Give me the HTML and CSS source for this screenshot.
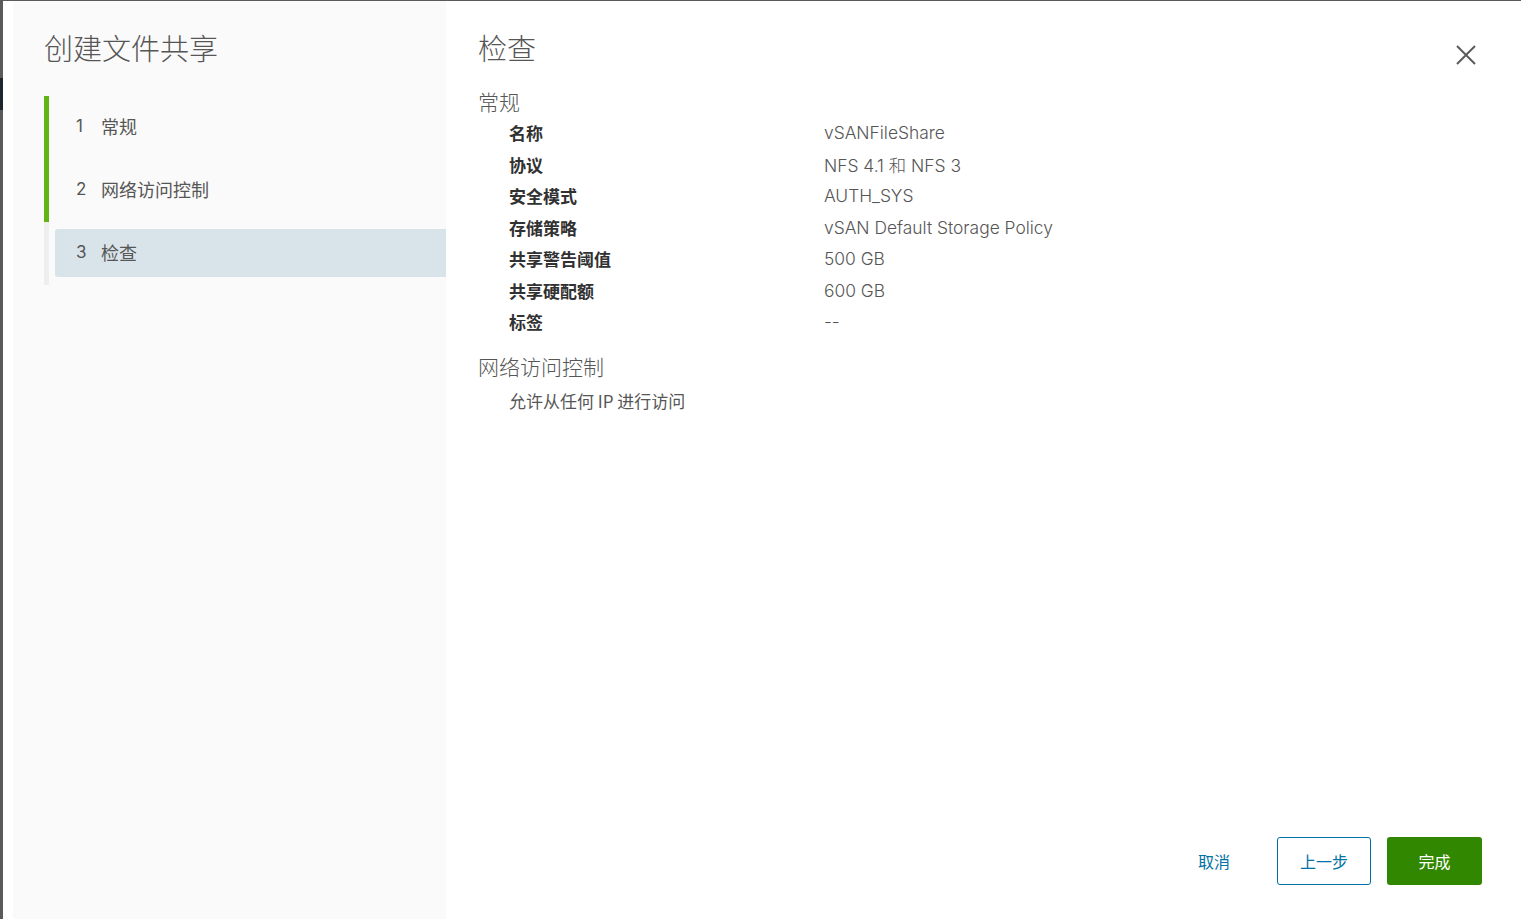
FILE: index.html
```html
<!DOCTYPE html>
<html lang="zh-CN">
<head>
<meta charset="utf-8">
<title>创建文件共享</title>
<link rel="stylesheet" href="styles.css">
</head>
<body>
<div class="modal">
  <aside class="sidebar">
    <h1 class="wizard-title">创建文件共享</h1>
    <ol class="steps">
      <li class="step done"><div class="step-btn"><span class="num">1</span><span>常规</span></div></li>
      <li class="step done"><div class="step-btn"><span class="num">2</span><span>网络访问控制</span></div></li>
      <li class="step current"><div class="step-btn"><span class="num">3</span><span>检查</span></div></li>
    </ol>
  </aside>
  <main class="content">
    <header class="content-head">
      <h2 class="page-title">检查</h2>
      <button class="close" aria-label="关闭">
        <svg width="20" height="20" viewBox="0 0 20 20"><path d="M1 1 L19 19 M19 1 L1 19" stroke="#5c5c5c" stroke-width="2" fill="none"/></svg>
      </button>
    </header>
    <section class="section">
      <h3 class="section-title">常规</h3>
      <div class="rows">
        <div class="row"><span class="label">名称</span><span class="value">vSANFileShare</span></div>
        <div class="row"><span class="label">协议</span><span class="value">NFS 4.1 和 NFS 3</span></div>
        <div class="row"><span class="label">安全模式</span><span class="value">AUTH_SYS</span></div>
        <div class="row"><span class="label">存储策略</span><span class="value">vSAN Default Storage Policy</span></div>
        <div class="row"><span class="label">共享警告阈值</span><span class="value">500 GB</span></div>
        <div class="row"><span class="label">共享硬配额</span><span class="value">600 GB</span></div>
        <div class="row"><span class="label">标签</span><span class="value">--</span></div>
      </div>
    </section>
    <section class="section second">
      <h3 class="section-title">网络访问控制</h3>
      <div class="rows">
        <div class="row"><span class="value plain">允许从任何 IP 进行访问</span></div>
      </div>
    </section>
    <footer class="footer">
      <button class="btn flat">取消</button>
      <button class="btn outline">上一步</button>
      <button class="btn primary">完成</button>
    </footer>
  </main>
</div>
</body>
</html>
```

FILE: styles.css
```css
* { box-sizing: border-box; }
html, body { margin: 0; padding: 0; }
body {
  width: 1521px;
  height: 919px;
  overflow: hidden;
  background: linear-gradient(to bottom, #5a5a5a 0, #5a5a5a 78px, #1c272d 78px, #1c272d 110px, #5a5a5a 110px);
  font-family: "Inter", "Noto Sans CJK SC", sans-serif;
  color: #565656;
}
.modal {
  margin: 1px 0 0 3px;
  width: 1518px;
  height: 918px;
  background: #fff;
  display: flex;
  padding-left: 10px;
}
.sidebar {
  width: 433px;
  flex: none;
  background: #fafafa;
  padding: 28px 0 0 31px;
}
.wizard-title {
  margin: 0;
  font-size: 29px;
  line-height: 36px;
  font-weight: 300;
  color: #565656;
  font-family: "Noto Sans CJK SC", sans-serif;
}
.steps {
  list-style: none;
  margin: 31px 0 0;
  padding: 0;
}
.step {
  border-left: 5px solid #eeeeee;
  padding: 7px 0 8px 6px;
}
.step.done { border-left-color: #60b515; }
.step-btn {
  height: 48px;
  display: flex;
  align-items: center;
  padding: 0 0 2px 21px;
  font-size: 18px;
  color: #565656;
  border-radius: 3px 0 0 3px;
  font-family: "Noto Sans CJK SC", sans-serif;
}
.step.current .step-btn { background: #d9e4ea; }
.num { width: 25px; font-family: "Inter", sans-serif; font-size: 17px; font-weight: 400; }
.content {
  flex: 1;
  display: flex;
  flex-direction: column;
  padding: 28px 39px 34px 32px;
}
.content-head {
  display: flex;
  justify-content: space-between;
  align-items: flex-start;
}
.page-title {
  margin: 0;
  font-size: 29px;
  line-height: 36px;
  font-weight: 300;
  color: #565656;
  font-family: "Noto Sans CJK SC", sans-serif;
}
.close {
  border: 0;
  background: none;
  padding: 0;
  margin: 16px 6px 0 0;
  width: 20px;
  height: 20px;
  cursor: pointer;
}
.close svg { display: block; }
.section-title {
  margin: 22px 0 0;
  font-size: 21px;
  line-height: 28px;
  font-weight: 300;
  color: #565656;
  font-family: "Noto Sans CJK SC", sans-serif;
}
.section.second .section-title { margin-top: 14px; }
.rows { padding-left: 31px; margin-top: 2px; }
.section.second .rows { margin-top: 5px; }
.row {
  display: flex;
  height: 31.5px;
  align-items: center;
}
.label {
  width: 315px;
  font-size: 17px;
  font-weight: 700;
  color: #313131;
  font-family: "Noto Sans CJK SC", sans-serif;
}
.value {
  font-size: 17.4px;
  font-weight: 300;
  color: #565656;
  font-family: "Inter", "Noto Sans CJK SC", sans-serif;
}
.value.plain { font-size: 17px; font-family: "Noto Sans CJK SC", sans-serif; font-weight: 400; }
.footer {
  margin-top: auto;
  display: flex;
  justify-content: flex-end;
  gap: 16px;
}
.btn {
  width: 94px;
  height: 48px;
  border-radius: 3px;
  font-size: 16px;
  font-family: "Noto Sans CJK SC", sans-serif;
  cursor: pointer;
  padding: 0;
}
.btn.flat { background: none; border: 0; color: #0072a3; }
.btn.outline { background: #fff; border: 1px solid #0072a3; color: #0072a3; }
.btn.primary { width: 95px; background: #318700; border: 0; color: #fff; }
```
